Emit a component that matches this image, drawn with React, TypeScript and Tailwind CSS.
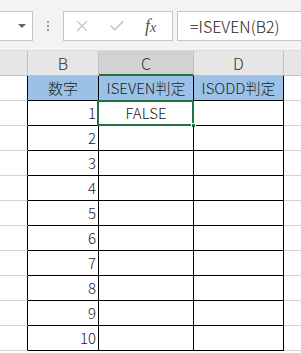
import { Check, X } from 'lucide-react'

const font = { fontFamily: '"Noto Sans CJK JP", "Noto Sans", sans-serif' }
const rows = [1, 2, 3, 4, 5, 6, 7, 8, 9, 10]

function ColHeader({ label, selected }: { label: string; selected?: boolean }) {
  return (
    <div
      className={
        'flex h-[25px] items-center justify-center border-r border-[#c0c0c0] text-[16px] font-light text-[#333] ' +
        (selected ? 'bg-[#d2d2d2] border-b-2 border-b-[#217346]' : 'bg-[#e6e6e6] border-b border-b-[#c0c0c0]')
      }
    >
      {label}
    </div>
  )
}

export default function App() {
  return (
    <div className="h-[353px] w-[301px] overflow-hidden bg-white font-light" style={font}>
      {/* Formula bar */}
      <div className="flex h-[51px] items-start border-b border-[#dadada] bg-[#f3f3f3] pt-[11px]">
        <div className="flex h-[30px] w-[33px] items-center justify-end border border-l-0 border-[#c6c6c6] bg-white pr-[6px]">
          <span className="h-0 w-0 border-x-[4px] border-t-[4px] border-x-transparent border-t-[#666]" />
        </div>
        <div className="flex h-[30px] w-[30px] flex-col items-center justify-center gap-[2px]">
          <span className="h-[2px] w-[2px] bg-[#999]" />
          <span className="h-[2px] w-[2px] bg-[#999]" />
          <span className="h-[2px] w-[2px] bg-[#999]" />
        </div>
        <div className="flex h-[30px] w-[110px] items-center border border-[#c6c6c6] bg-white">
          <X className="ml-[9px] h-[18px] w-[18px] text-[#c4c4c4]" strokeWidth={1.6} />
          <Check className="ml-[17px] h-[18px] w-[18px] text-[#c4c4c4]" strokeWidth={2.2} />
          <span
            className="ml-[19px] text-[18px] italic text-[#555]"
            style={{ fontFamily: '"Liberation Serif", serif' }}
          >
            f<span className="text-[14px]">x</span>
          </span>
        </div>
        <div className="ml-[4px] flex h-[30px] flex-1 items-center border border-r-0 border-[#c6c6c6] bg-white pl-[12px] text-[16px] text-[#222]">
          =ISEVEN(B2)
        </div>
      </div>

      {/* Sheet */}
      <div className="grid grid-cols-[28px_71px_95px_90px_1fr]">
        <div className="h-[25px] border-r border-b border-[#c0c0c0] bg-[#e6e6e6]" />
        <ColHeader label="B" />
        <ColHeader label="C" selected />
        <ColHeader label="D" />
        <div className="h-[25px] border-b border-[#c0c0c0] bg-[#e6e6e6]" />

        {/* Header row */}
        <div className="h-[25px] border-r border-r-black border-b border-b-[#d4d4d4]" />
        <div className="flex h-[25px] items-center justify-center border-r border-b border-black bg-[#9bc2e6] text-[15px] text-[#222]">
          数字
        </div>
        <div className="flex h-[25px] items-center justify-center border-r border-b border-black bg-[#9bc2e6] text-[15px] text-[#222]">
          ISEVEN判定
        </div>
        <div className="flex h-[25px] items-center justify-center border-r border-b border-black bg-[#9bc2e6] text-[15px] text-[#222]">
          ISODD判定
        </div>
        <div className="h-[25px] border-b border-[#d4d4d4]" />

        {rows.map((n) => (
          <div key={n} className="contents">
            <div className="h-[25px] border-r border-r-black border-b border-b-[#d4d4d4]" />
            <div className="flex h-[25px] items-center justify-end border-r border-b border-black pr-[2px] text-[15px] text-[#222]">
              {n}
            </div>
            <div className="relative flex h-[25px] items-center justify-center border-r border-b border-black text-[15px] text-[#222]">
              {n === 1 && (
                <>
                  <div className="absolute -top-px -left-[2px] -right-[1px] -bottom-[1px] border-2 border-[#217346]" />
                  <div className="absolute -bottom-[3px] -right-[3px] h-[5px] w-[5px] border border-white bg-[#217346]" />
                  FALSE
                </>
              )}
            </div>
            <div className="h-[25px] border-r border-b border-black" />
            <div className="h-[25px] border-b border-[#d4d4d4]" />
          </div>
        ))}
      </div>
    </div>
  )
}
